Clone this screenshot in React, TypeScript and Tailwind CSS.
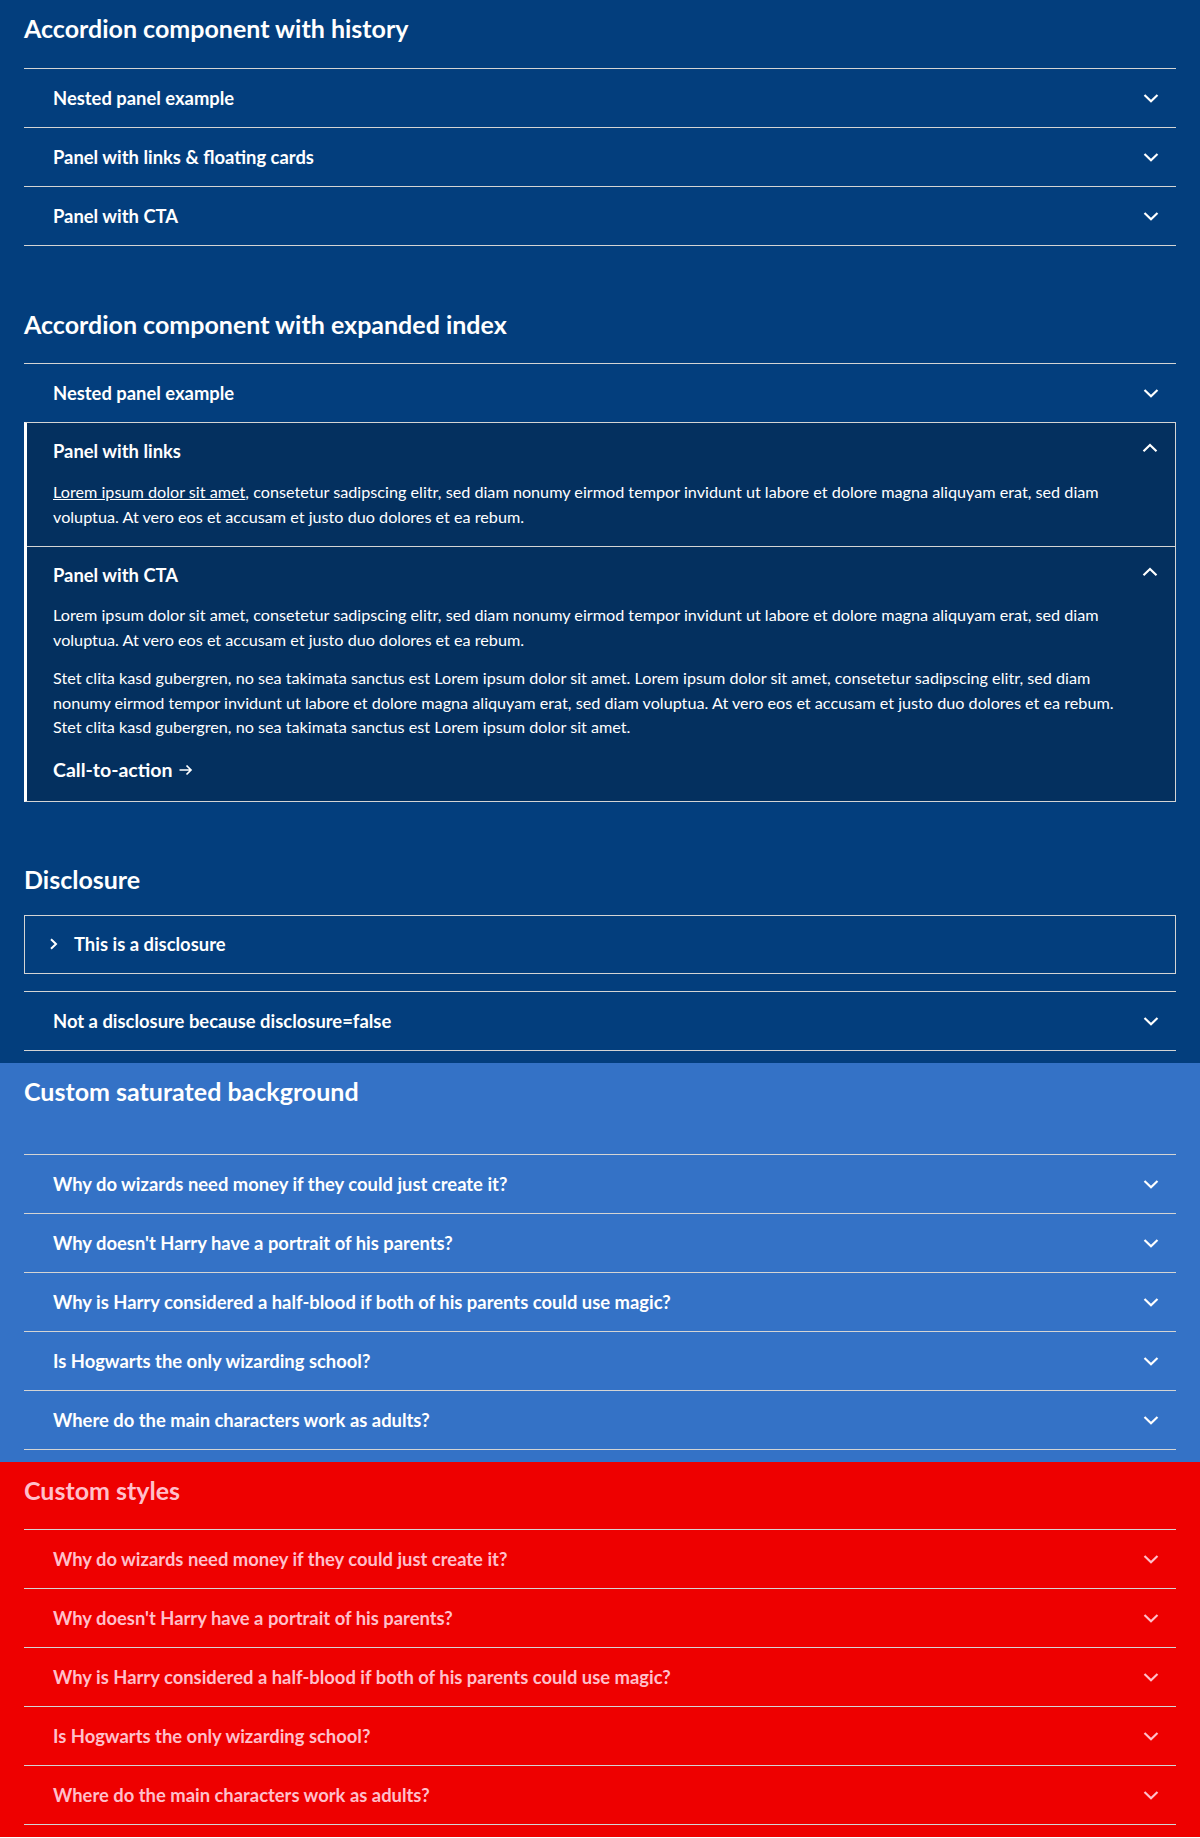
import React from 'react'

const font = { fontFamily: 'Lato, "Open Sans", sans-serif' }

function ChevronDown({ className = '' }: { className?: string }) {
  return (
    <svg width="16" height="10" viewBox="0 0 16 10" className={className}>
      <path d="M1.5 2 L8 8.2 L14.5 2" fill="none" stroke="currentColor" strokeWidth="2.2" />
    </svg>
  )
}

function ChevronUp({ className = '' }: { className?: string }) {
  return (
    <svg width="16" height="10" viewBox="0 0 16 10" className={className}>
      <path d="M1.5 8.2 L8 2 L14.5 8.2" fill="none" stroke="currentColor" strokeWidth="2.2" />
    </svg>
  )
}

function ChevronRight() {
  return (
    <svg width="9" height="12" viewBox="0 0 9 12">
      <path d="M2 1.2 L7 6 L2 10.8" fill="none" stroke="currentColor" strokeWidth="2" />
    </svg>
  )
}

function Row({ title }: { title: string }) {
  return (
    <div className="border-b border-[#d4d4d4]">
      <div className="flex items-center justify-between h-[58px] pl-[29px] pr-[17px]">
        <span className="text-[18.4px] leading-[24px] font-bold">{title}</span>
        <ChevronDown />
      </div>
    </div>
  )
}

function Heading({ children, className = '' }: { children: React.ReactNode; className?: string }) {
  return <h2 className={`text-[25px] leading-[32px] font-bold ${className}`}>{children}</h2>
}

const lead = 'Lorem ipsum dolor sit amet'
const lorem =
  'Lorem ipsum dolor sit amet, consetetur sadipscing elitr, sed diam nonumy eirmod tempor invidunt ut labore et dolore magna aliquyam erat, sed diam voluptua. At vero eos et accusam et justo duo dolores et ea rebum.'
const stet =
  'Stet clita kasd gubergren, no sea takimata sanctus est Lorem ipsum dolor sit amet. Lorem ipsum dolor sit amet, consetetur sadipscing elitr, sed diam nonumy eirmod tempor invidunt ut labore et dolore magna aliquyam erat, sed diam voluptua. At vero eos et accusam et justo duo dolores et ea rebum. Stet clita kasd gubergren, no sea takimata sanctus est Lorem ipsum dolor sit amet.'

const questions = [
  'Why do wizards need money if they could just create it?',
  "Why doesn't Harry have a portrait of his parents?",
  'Why is Harry considered a half-blood if both of his parents could use magic?',
  'Is Hogwarts the only wizarding school?',
  'Where do the main characters work as adults?',
]

export default function App() {
  return (
    <div style={font} className="w-[1200px] min-h-[1838px] text-white">
      <div className="bg-[#033e7d] px-[24px] pt-[12px] pb-[12px]">
        <Heading className="mb-[24px]">Accordion component with history</Heading>
        <div className="border-t border-[#d4d4d4]">
          <Row title="Nested panel example" />
          <Row title="Panel with links & floating cards" />
          <Row title="Panel with CTA" />
        </div>

        <Heading className="mt-[62px] mb-[23px]">Accordion component with expanded index</Heading>
        <div className="border-t border-[#d4d4d4]">
          <Row title="Nested panel example" />
        </div>
        <div className="-mt-[1px] bg-[#04305f] border border-[#d4d4d4] border-l-[3px] border-l-white">
          <div className="pl-[26px] pr-[17px] pt-[16px] pb-[17px] border-b border-[#d4d4d4]">
            <div className="flex items-center justify-between">
              <span className="text-[18.4px] leading-[24px] font-bold">Panel with links</span>
              <ChevronUp className="-mt-[6px]" />
            </div>
            <p className="mt-[17px] pr-[20px] text-[16.2px] leading-[24.5px]">
              <a className="underline">{lead}</a>
              {lorem.slice(lead.length)}
            </p>
          </div>
          <div className="pl-[26px] pr-[17px] pt-[16px] pb-[18px]">
            <div className="flex items-center justify-between">
              <span className="text-[18.4px] leading-[24px] font-bold">Panel with CTA</span>
              <ChevronUp className="-mt-[6px]" />
            </div>
            <div className="pr-[20px] text-[16.2px] leading-[24.5px]">
              <p className="mt-[16px]">{lorem}</p>
              <p className="mt-[14px]">{stet}</p>
            </div>
            <a className="mt-[18px] inline-flex items-center gap-[6px] text-[19.5px] leading-[24px] font-bold">
              Call-to-action
              <svg width="15" height="14" viewBox="0 0 15 14">
                <path d="M1.5 7 H13 M8.5 2.5 L13 7 L8.5 11.5" fill="none" stroke="currentColor" strokeWidth="1.7" />
              </svg>
            </a>
          </div>
        </div>

        <Heading className="mt-[61px] mb-[20px]">Disclosure</Heading>
        <div className="border border-[#d4d4d4] h-[59px] flex items-center pl-[24px] gap-[16px]">
          <ChevronRight />
          <span className="text-[18.4px] leading-[24px] font-bold">This is a disclosure</span>
        </div>
        <div className="mt-[17px] border-t border-[#d4d4d4]">
          <Row title="Not a disclosure because disclosure=false" />
        </div>
      </div>

      <div className="bg-[#3472c6] px-[24px] pt-[12px] pb-[12px]">
        <Heading className="mb-[47px]">Custom saturated background</Heading>
        <div className="border-t border-[#d4d4d4]">
          {questions.map((q) => (
            <Row key={q} title={q} />
          ))}
        </div>
      </div>

      <div className="bg-[#ee0000] px-[24px] pt-[12px] pb-[12px] text-[#ffbfca]">
        <Heading className="mb-[23px]">Custom styles</Heading>
        <div className="border-t border-[#d4d4d4]">
          {questions.map((q) => (
            <Row key={q} title={q} />
          ))}
        </div>
      </div>
    </div>
  )
}
